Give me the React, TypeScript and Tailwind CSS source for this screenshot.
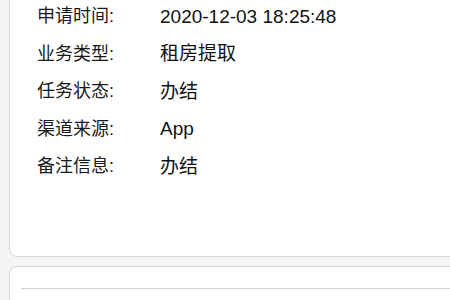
import React from "react";

const rows: [string, string][] = [
  ["申请时间:", "2020-12-03 18:25:48"],
  ["业务类型:", "租房提取"],
  ["任务状态:", "办结"],
  ["渠道来源:", "App"],
  ["备注信息:", "办结"],
];

export default function App() {
  return (
    <div
      className="w-[450px] h-[300px] overflow-hidden bg-[#f5f5f7]"
      style={{ fontFamily: '"Liberation Sans", "Noto Sans CJK SC", sans-serif' }}
    >
      <div className="ml-[9px] w-[470px] -mt-[20px] bg-white border border-[#d6d6db] rounded-[8px] pt-[17px] pb-[70px]">
        {rows.map(([k, v]) => (
          <div key={k} className="flex items-center h-[37.5px] text-[#111]">
            <div className="w-[150px] pl-[27px] shrink-0 text-[18px] text-[#1a1a1a]">{k}</div>
            <div className="text-[19px]">{v}</div>
          </div>
        ))}
      </div>
      <div className="ml-[9px] mt-[9px] w-[470px] h-[60px] bg-white border border-[#d6d6db] rounded-[8px] pt-[21px] pl-[11px]">
        <div className="border-t border-[#cfcfd3]" />
      </div>
    </div>
  );
}
